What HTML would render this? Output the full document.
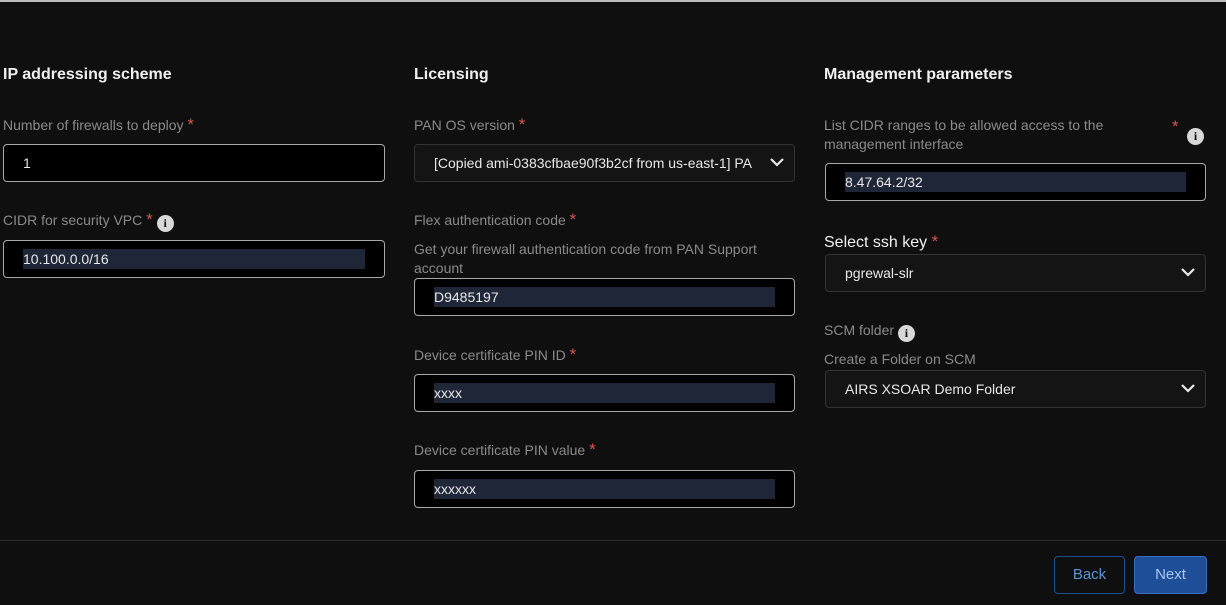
<!DOCTYPE html>
<html><head><style>
*{margin:0;padding:0;box-sizing:border-box}
body{width:1226px;height:605px;background:#0f0f0f;font-family:"Liberation Sans",sans-serif;position:relative;overflow:hidden;color:#ddd}
.a{position:absolute;white-space:nowrap}
.h{font-size:16px;color:#f0f0f0;font-weight:bold}
.l{font-size:14px;color:#8a8a8a}
.s{color:#d9534f;font-size:17px;line-height:14px}
.in{position:absolute;background:#000;border:1.5px solid #a8a8a8;border-radius:4px;height:38px}
.sel{position:absolute;background:#141414;border:1px solid #333;border-radius:4px;height:38px}
.hl{position:absolute;background:#1f2637;height:20px}
.t{font-size:14px;color:#e8e8e8}
.i{display:inline-block;width:17px;height:17px;border-radius:50%;background:#d8d8d8;color:#111;font-size:12px;font-weight:bold;text-align:center;line-height:17px;font-family:"Liberation Serif",serif;vertical-align:-2px}
.chev{position:absolute;width:16px;height:10px}
</style></head><body>
<div class="a" style="left:0;top:0;width:1226px;height:2px;background:#bbb"></div>

<div class="a h" style="left:3px;top:66px">IP addressing scheme</div>
<div class="a h" style="left:414px;top:66px">Licensing</div>
<div class="a h" style="left:824px;top:66px">Management parameters</div>

<div class="a l" style="left:3px;top:117px">Number of firewalls to deploy <span class="s">*</span></div>
<div class="in" style="left:3px;top:144px;width:382px"></div>
<div class="a t" style="left:23px;top:155px">1</div>

<div class="a l" style="left:3px;top:212px">CIDR for security VPC <span class="s">*</span> <span class="i">i</span></div>
<div class="in" style="left:3px;top:240px;width:382px"></div>
<div class="hl" style="left:23px;top:249px;width:342px"></div>
<div class="a t" style="left:23px;top:251px">10.100.0.0/16</div>

<div class="a l" style="left:414px;top:117px">PAN OS version <span class="s">*</span></div>
<div class="sel" style="left:414px;top:144px;width:381px"></div>
<div class="a t" style="left:434px;top:155px;width:330px;overflow:hidden">[Copied ami-0383cfbae90f3b2cf from us-east-1] PA</div>
<svg class="chev" style="left:769px;top:157px" viewBox="0 0 16 10"><path d="M2 2l6 6 6-6" stroke="#e8e8e8" stroke-width="2.2" fill="none"/></svg>

<div class="a l" style="left:414px;top:212px">Flex authentication code <span class="s">*</span></div>
<div class="a l" style="left:414px;top:241px">Get your firewall authentication code from PAN Support</div>
<div class="a l" style="left:414px;top:260px">account</div>
<div class="in" style="left:414px;top:278px;width:381px"></div>
<div class="hl" style="left:434px;top:287px;width:341px"></div>
<div class="a t" style="left:434px;top:289px">D9485197</div>

<div class="a l" style="left:414px;top:347px">Device certificate PIN ID <span class="s">*</span></div>
<div class="in" style="left:414px;top:374px;width:381px"></div>
<div class="hl" style="left:434px;top:383px;width:341px"></div>
<div class="a t" style="left:434px;top:385px">xxxx</div>

<div class="a l" style="left:414px;top:442px">Device certificate PIN value <span class="s">*</span></div>
<div class="in" style="left:414px;top:470px;width:381px"></div>
<div class="hl" style="left:434px;top:479px;width:341px"></div>
<div class="a t" style="left:434px;top:481px">xxxxxx</div>

<div class="a l" style="left:824px;top:117px">List CIDR ranges to be allowed access to the</div>
<div class="a l" style="left:824px;top:136px">management interface</div>
<div class="a s" style="left:1172px;top:120px">*</div>
<div class="a" style="left:1187px;top:125px"><span class="i">i</span></div>
<div class="in" style="left:825px;top:163px;width:381px"></div>
<div class="hl" style="left:845px;top:172px;width:341px"></div>
<div class="a t" style="left:845px;top:174px">8.47.64.2/32</div>

<div class="a" style="left:824px;top:234px;font-size:16px;color:#f0f0f0">Select ssh key <span class="s">*</span></div>
<div class="sel" style="left:825px;top:254px;width:381px"></div>
<div class="a t" style="left:845px;top:265px">pgrewal-slr</div>
<svg class="chev" style="left:1180px;top:267px" viewBox="0 0 16 10"><path d="M2 2l6 6 6-6" stroke="#e8e8e8" stroke-width="2.2" fill="none"/></svg>

<div class="a l" style="left:824px;top:322px">SCM folder <span class="i">i</span></div>
<div class="a l" style="left:824px;top:351px">Create a Folder on SCM</div>
<div class="sel" style="left:825px;top:370px;width:381px"></div>
<div class="a t" style="left:845px;top:381px">AIRS XSOAR Demo Folder</div>
<svg class="chev" style="left:1180px;top:383px" viewBox="0 0 16 10"><path d="M2 2l6 6 6-6" stroke="#e8e8e8" stroke-width="2.2" fill="none"/></svg>

<div class="a" style="left:0;top:540px;width:1226px;height:1px;background:#2a2a2a"></div>
<div class="a" style="left:1054px;top:556px;width:71px;height:38px;border:1.5px solid #1f4f91;border-radius:4px;color:#5b95d8;font-size:15px;text-align:center;line-height:35px">Back</div>
<div class="a" style="left:1134px;top:556px;width:73px;height:38px;border:1.5px solid #3a6fc0;background:#1e4e98;border-radius:4px;color:#a8c6ee;font-size:15px;text-align:center;line-height:35px">Next</div>
</body></html>
